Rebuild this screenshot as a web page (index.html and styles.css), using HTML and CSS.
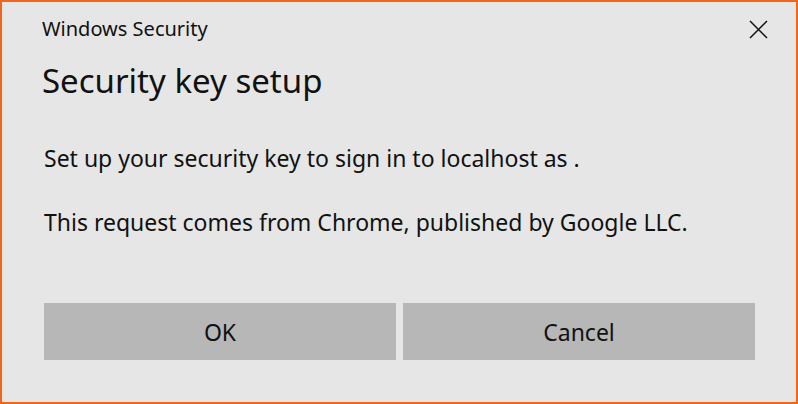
FILE: index.html
```html
<!DOCTYPE html>
<html>
<head>
<meta charset="utf-8">
<link rel="stylesheet" href="styles.css">
</head>
<body>
<div class="dialog">
  <div class="titlebar">
    <span class="app">Windows Security</span>
    <button class="close" aria-label="Close">
      <svg width="19" height="19" viewBox="0 0 19 19"><path d="M1 1 L18 18 M18 1 L1 18" stroke="#111" stroke-width="1.5" fill="none"/></svg>
    </button>
  </div>
  <h1 class="heading">Security key setup</h1>
  <p class="msg first">Set up your security key to sign in to localhost as .</p>
  <p class="msg second">This request comes from Chrome, published by Google LLC.</p>
  <div class="actions">
    <button class="btn">OK</button>
    <button class="btn">Cancel</button>
  </div>
</div>
</body>
</html>
```
FILE: styles.css
```css
html, body { margin: 0; padding: 0; }
body { width: 798px; height: 404px; font-family: "Noto Sans", "Open Sans", sans-serif; color: #111; }
.dialog {
  box-sizing: border-box;
  width: 798px; height: 404px;
  border: 2px solid #f0661a;
  background: #e6e6e6;
  display: flex; flex-direction: column;
  padding: 0 41px 0 40px;
}
.titlebar { display: flex; align-items: center; justify-content: space-between; height: 28px; margin-top: 13px; }
.app { font-size: 20px; line-height: 28px; color: #111; }
.close { border: 0; background: none; padding: 0; width: 19px; height: 19px; margin-right: -13px; display: flex; }
.heading { margin: 16px 0 0; font-weight: 400; font-size: 33px; line-height: 44px; color: #111; }
.msg { margin: 0; font-size: 23px; line-height: 32px; padding-left: 2px; color: #111; }
.msg.first { margin-top: 39px; }
.msg.second { margin-top: 32px; }
.actions { display: flex; gap: 7px; margin-top: auto; margin-bottom: 42px; padding-left: 2px; }
.btn { flex: 1; height: 57px; border: 0; background: #b7b7b7; font-family: inherit; font-size: 23px; color: #111; padding: 0; }
```
